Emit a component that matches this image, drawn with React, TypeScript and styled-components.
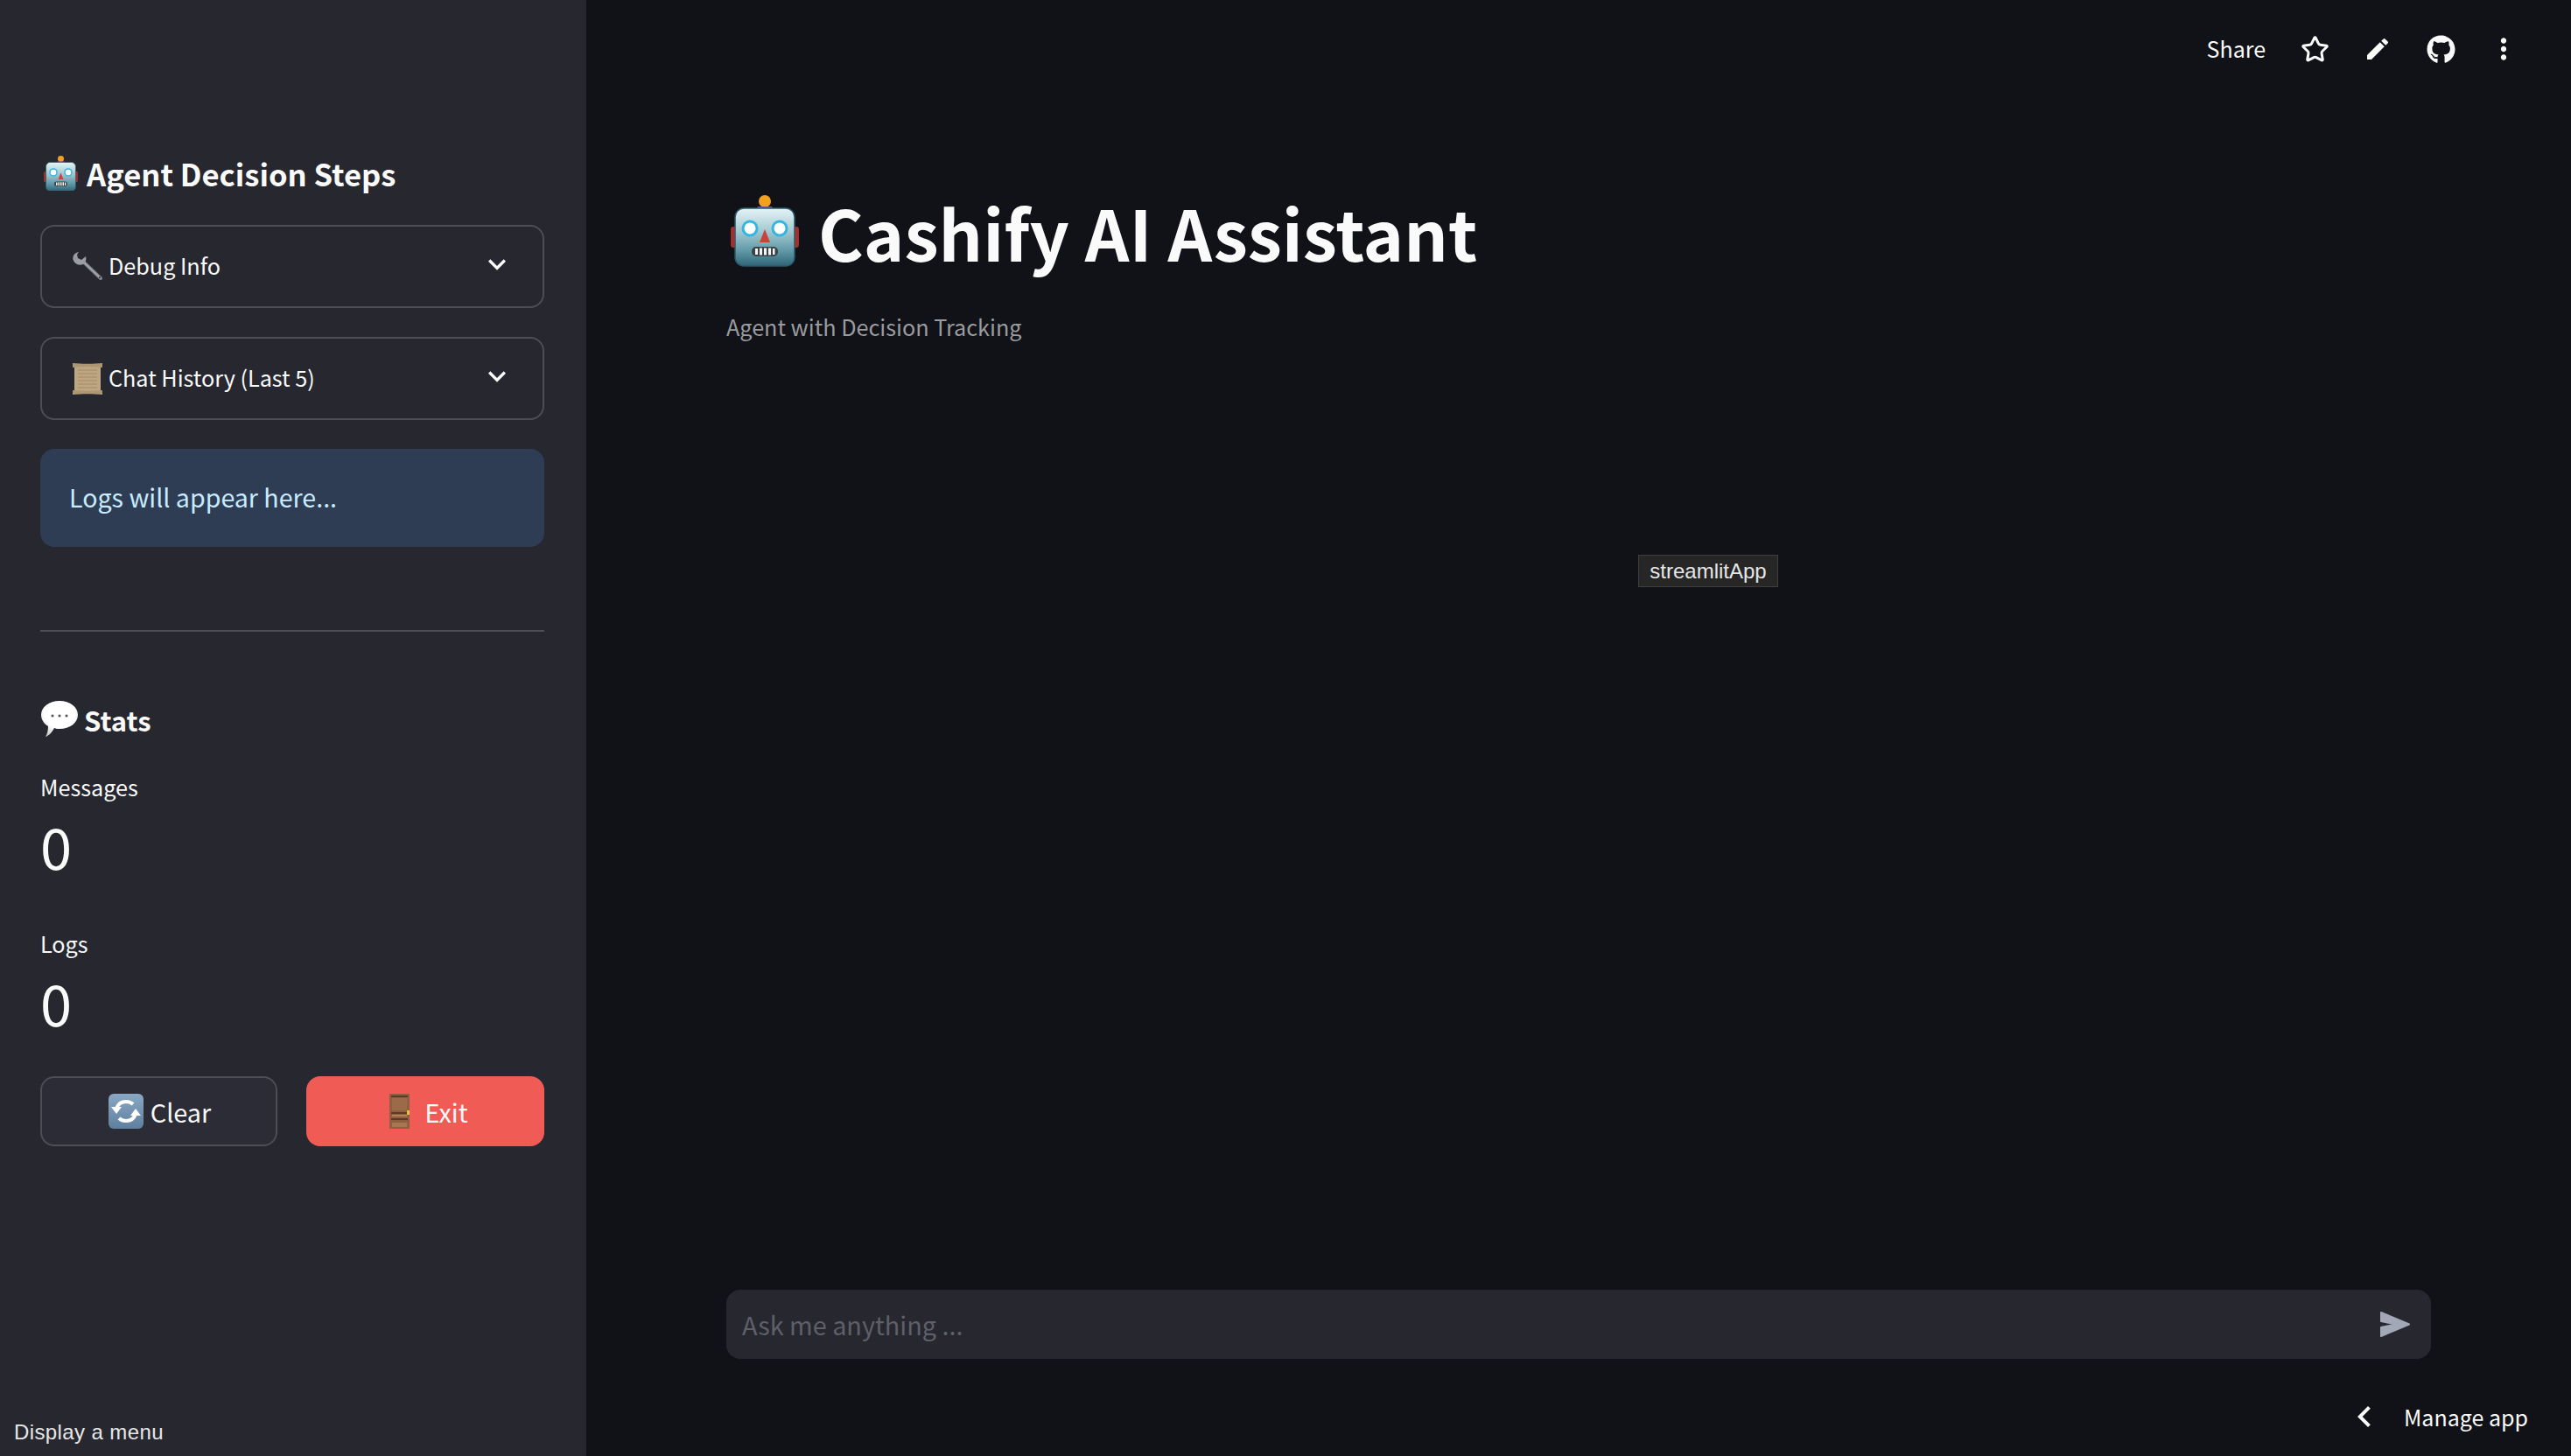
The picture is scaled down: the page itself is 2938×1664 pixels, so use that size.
import React from "react";
import styled, { createGlobalStyle } from "styled-components";
import { MdEdit, MdMoreVert, MdExpandMore, MdChevronLeft } from "react-icons/md";
import { FaGithub } from "react-icons/fa";
import { Star } from "lucide-react";

const Global = createGlobalStyle`
  html, body { margin: 0; padding: 0; background: #101217; }
  body { font-family: "Noto Sans CJK SC", "Noto Sans", sans-serif; color: #fafafa; overflow: hidden; }
  * { box-sizing: border-box; }
`;

const Page = styled.div`
  display: flex;
  width: 2938px;
  height: 1664px;
  position: relative;
  background: #101217;
`;

const Sidebar = styled.aside`
  width: 670px;
  height: 100%;
  flex: none;
  background: #27282f;
  padding: 170px 48px 0 46px;
  display: flex;
  flex-direction: column;
`;

const SideHeading = styled.h3<{ $small?: boolean }>`
  margin: ${p => (p.$small ? "75px 0 0" : "0")};
  height: ${p => (p.$small ? "50px" : "56px")};
  display: flex;
  align-items: center;
  gap: ${p => (p.$small ? "7px" : "10px")};
  padding-left: ${p => (p.$small ? "1px" : "4px")};
  font-size: ${p => (p.$small ? "31px" : "34.6px")};
  font-weight: 700;
  color: #fafafa;
`;

const Expander = styled.div<{ $first?: boolean }>`
  margin-top: ${p => (p.$first ? "31px" : "33px")};
  height: 95px;
  border: 2px solid #4c4d56;
  border-radius: 16px;
  padding: 0 32px 0 34px;
  display: flex;
  align-items: center;
  font-size: 25.2px;
  gap: 6px;
  color: #fafafa;
`;

const ExpanderLabel = styled.span`
  flex: 1;
  margin-top: -3px;
`;

const Chevron = styled(MdExpandMore)`
  font-size: 40px;
  margin-top: -6px;
  color: #fafafa;
`;

const InfoBox = styled.div`
  margin-top: 33px;
  height: 112px;
  border-radius: 16px;
  background: #2f3d54;
  color: #c7ebff;
  font-size: 28.6px;
  display: flex;
  align-items: center;
  padding: 0 0 3px 33px;
`;

const Divider = styled.hr`
  margin: 95px 0 0;
  border: 0;
  height: 2px;
  background: #4c4d56;
`;

const MetricLabel = styled.div<{ $first?: boolean }>`
  margin-top: ${p => (p.$first ? "32px" : "48px")};
  height: 40px;
  font-size: 25.2px;
  line-height: 40px;
  color: #fafafa;
`;

const MetricValue = styled.div`
  margin-top: 3px;
  height: 88px;
  font-size: 65px;
  line-height: 88px;
  font-weight: 400;
  color: #fafafa;
`;

const ButtonRow = styled.div`
  margin-top: 41px;
  display: grid;
  grid-template-columns: 271px 272px;
  gap: 33px;
`;

const ActionButton = styled.button<{ $danger?: boolean }>`
  height: 80px;
  border-radius: 16px;
  border: ${p => (p.$danger ? "0" : "2px solid #4c4d56")};
  background: ${p => (p.$danger ? "#f15b55" : "#2b2c36")};
  color: #fafafa;
  font-family: inherit;
  font-size: 28.8px;
  display: flex;
  align-items: center;
  justify-content: center;
  gap: ${p => (p.$danger ? "16px" : "8px")};
  padding: 0 0 0 ${p => (p.$danger ? "8px" : "2px")};
`;

const Main = styled.main`
  flex: 1;
  height: 100%;
  display: flex;
  flex-direction: column;
`;

const Toolbar = styled.header`
  height: 112px;
  flex: none;
  display: flex;
  align-items: center;
  justify-content: flex-end;
  padding-right: 41px;
`;

const ShareLabel = styled.span`
  font-size: 25px;
  margin: -3px 20px 0 0;
  color: #fafafa;
`;

const ToolIcon = styled.span`
  width: 72px;
  display: flex;
  justify-content: center;
  align-items: center;
  color: #fafafa;
`;

const Content = styled.section`
  flex: 1;
  padding: 0 0 0 160px;
`;

const Title = styled.h1`
  margin: 92px 0 0;
  height: 120px;
  display: flex;
  align-items: center;
  gap: 22px;
  padding-left: 5px;
  font-size: 79px;
  font-weight: 700;
  color: #fafafa;
`;

const Caption = styled.p`
  margin: 29px 0 0;
  height: 40px;
  line-height: 40px;
  font-size: 25.2px;
  color: #9a9b9e;
`;

const ChatBar = styled.div`
  flex: none;
  margin-left: 160px;
  width: 1948px;
  height: 79px;
  border-radius: 16px;
  background: #27282f;
  display: flex;
  align-items: center;
  justify-content: space-between;
  padding: 0 23px 0 18px;
`;

const Placeholder = styled.span`
  font-size: 28.8px;
  color: #5e5f68;
`;

const Footer = styled.footer`
  flex: none;
  height: 111px;
  display: flex;
  align-items: center;
  justify-content: flex-end;
  padding: 21px 49px 0 0;
`;

const ManageChevron = styled(MdChevronLeft)`
  font-size: 48px;
  margin-right: 21px;
  color: #fafafa;
`;

const ManageLabel = styled.span`
  font-size: 25px;
  color: #fafafa;
`;

const Tip = styled.div`
  position: absolute;
  font-family: "Liberation Sans", Arial, sans-serif;
  font-size: 24px;
  color: #e6e6e6;
  white-space: nowrap;
`;

const ElementTip = styled(Tip)`
  left: 1872px;
  top: 634px;
  width: 160px;
  height: 37px;
  line-height: 35px;
  text-align: center;
  background: #262626;
  border: 1px solid #3e3e3e;
`;

const MenuTip = styled(Tip)`
  left: 16px;
  top: 1623px;
  line-height: 28px;
  letter-spacing: 0.4px;
`;

const Emoji = styled.svg`
  flex: none;
  display: block;
`;

const Robot = ({ size, id }: { size: number; id: string }) => (
  <Emoji width={size} height={size * 1.05} viewBox="0 0 78 82">
    <defs>
      <linearGradient id={id} x1="0" y1="0" x2="0" y2="1">
        <stop offset="0" stopColor="#e6f4f6" />
        <stop offset="0.4" stopColor="#a3c9d1" />
        <stop offset="0.75" stopColor="#5f97a6" />
        <stop offset="1" stopColor="#2f6577" />
      </linearGradient>
    </defs>
    <rect x="0" y="36" width="10" height="24" rx="3" fill="#a5302b" />
    <rect x="68" y="36" width="10" height="24" rx="3" fill="#a5302b" />
    <ellipse cx="39" cy="7" rx="7" ry="7" fill="#f2a11e" />
    <path d="M31 13h16l3 6c-3 2-19 2-22 0z" fill="#6b5a9c" />
    <rect x="5" y="15" width="68" height="66" rx="10" fill={`url(#${id})`} stroke="#2e5b6b" strokeWidth="1.5" />
    <circle cx="22" cy="38" r="9.5" fill="#35b6e0" />
    <circle cx="56" cy="38" r="9.5" fill="#35b6e0" />
    <circle cx="22" cy="38" r="6.5" fill="#ffffff" />
    <circle cx="56" cy="38" r="6.5" fill="#ffffff" />
    <path d="M39 39l6 15H33z" fill="#c9433c" />
    <rect x="24" y="59" width="30" height="11" rx="5" fill="#3a4347" />
    <path d="M28 61h3v7h-3zM33 60.5h3v8h-3zM38 60.5h3v8h-3zM43 60.5h3v8h-3zM48 61h2.5v7H48z" fill="#f4f6f6" />
  </Emoji>
);

const Wrench = () => (
  <Emoji width="36" height="34" viewBox="0 0 36 34">
    <path d="M13 11L33 30" stroke="#7d8084" strokeWidth="4" strokeLinecap="round" />
    <path d="M13 11L33 30" stroke="#a9acaf" strokeWidth="1.5" strokeLinecap="round" />
    <path d="M8 0C3 1 0 5 2 10c2 4 7 6 11 4 3-2 4-6 3-9l-5 4-4-2-1-4z" fill="#9a9da1" />
    <circle cx="32" cy="29" r="1" fill="#2b2c36" />
  </Emoji>
);

const Scroll = () => (
  <Emoji width="36" height="36" viewBox="0 0 36 36">
    <rect x="3" y="2" width="30" height="32" fill="#bfa682" />
    <path d="M7 8h22M7 12h22M7 16h22M7 20h22M7 24h22M7 28h22" stroke="#a48a67" strokeWidth="1" />
    <path d="M1 0c10 1 24 1 34 0v5C25 4 11 4 1 5z" fill="#ad9673" />
    <path d="M1 31c10 1 24 1 34 0v5c-10-1-24-1-34 0z" fill="#ad9673" />
  </Emoji>
);

const Bubble = () => (
  <Emoji width="42" height="42" viewBox="0 0 42 42">
    <defs>
      <radialGradient id="bub" cx="0.5" cy="0.35" r="0.7">
        <stop offset="0.6" stopColor="#ffffff" />
        <stop offset="1" stopColor="#c4c4c4" />
      </radialGradient>
    </defs>
    <path d="M21 0c12 0 21 7 21 16S33 32 21 32c-2 0-4 0-6-1-2 4-6 9-10 10 2-3 3-8 3-12C3 26 0 21 0 16 0 7 9 0 21 0z" fill="url(#bub)" />
    <circle cx="13" cy="17" r="1.6" fill="#555" />
    <circle cx="21" cy="17" r="1.6" fill="#555" />
    <circle cx="29" cy="17" r="1.6" fill="#555" />
  </Emoji>
);

const Refresh = () => (
  <Emoji width="40" height="40" viewBox="0 0 40 40">
    <defs>
      <linearGradient id="refr" x1="0" y1="0" x2="0" y2="1">
        <stop offset="0" stopColor="#8aa8c4" />
        <stop offset="1" stopColor="#5f7f9e" />
      </linearGradient>
    </defs>
    <rect width="40" height="40" rx="6" fill="url(#refr)" />
    <path d="M9 17c2-6 6-8 11-8 3 0 6 1 8 3" fill="none" stroke="#fff" strokeWidth="4" />
    <path d="M31 23c-2 6-6 8-11 8-3 0-6-1-8-3" fill="none" stroke="#fff" strokeWidth="4" />
    <path d="M3 15h12l-6 8zM37 25H25l6-8z" fill="#fff" />
  </Emoji>
);

const Door = () => (
  <Emoji width="24" height="40" viewBox="0 0 24 40">
    <rect x="0" y="0" width="23" height="40" fill="#8f5f40" />
    <rect x="2" y="2" width="19" height="2" fill="#5b3a26" />
    <rect x="3" y="5" width="17" height="14" fill="#9b6a48" />
    <rect x="2" y="21" width="19" height="2" fill="#5b3a26" />
    <rect x="3" y="24" width="17" height="2" fill="#b08058" />
    <rect x="2" y="28" width="19" height="2" fill="#5b3a26" />
    <rect x="3" y="33" width="17" height="5" fill="#a87550" />
    <rect x="20" y="19" width="3" height="5" fill="#e6c23c" />
  </Emoji>
);

const Send = () => (
  <Emoji width="36" height="31" viewBox="0 0 36 31">
    <path d="M2 2L34 15.5 2 29l0-10 17-3.5L2 12z" fill="#a3a8b8" stroke="#a3a8b8" strokeWidth="2" strokeLinejoin="round" />
  </Emoji>
);

export default function App() {
  return (
    <Page>
      <Global />
      <Sidebar>
        <SideHeading>
          <Robot size={39} id="robotSmall" />
          Agent Decision Steps
        </SideHeading>
        <Expander $first>
          <Wrench />
          <ExpanderLabel>Debug Info</ExpanderLabel>
          <Chevron />
        </Expander>
        <Expander>
          <Scroll />
          <ExpanderLabel>Chat History (Last 5)</ExpanderLabel>
          <Chevron />
        </Expander>
        <InfoBox>Logs will appear here...</InfoBox>
        <Divider />
        <SideHeading $small>
          <Bubble />
          Stats
        </SideHeading>
        <MetricLabel $first>Messages</MetricLabel>
        <MetricValue>0</MetricValue>
        <MetricLabel>Logs</MetricLabel>
        <MetricValue>0</MetricValue>
        <ButtonRow>
          <ActionButton>
            <Refresh />
            Clear
          </ActionButton>
          <ActionButton $danger>
            <Door />
            Exit
          </ActionButton>
        </ButtonRow>
      </Sidebar>
      <Main>
        <Toolbar>
          <ShareLabel>Share</ShareLabel>
          <ToolIcon><Star size={33} strokeWidth={2.2} /></ToolIcon>
          <ToolIcon><MdEdit size={32} /></ToolIcon>
          <ToolIcon><FaGithub size={33} /></ToolIcon>
          <ToolIcon><MdMoreVert size={38} /></ToolIcon>
        </Toolbar>
        <Content>
          <Title>
            <Robot size={78} id="robotLarge" />
            Cashify AI Assistant
          </Title>
          <Caption>Agent with Decision Tracking</Caption>
        </Content>
        <ChatBar>
          <Placeholder>Ask me anything ...</Placeholder>
          <Send />
        </ChatBar>
        <Footer>
          <ManageChevron />
          <ManageLabel>Manage app</ManageLabel>
        </Footer>
      </Main>
      <ElementTip>streamlitApp</ElementTip>
      <MenuTip>Display a menu</MenuTip>
    </Page>
  );
}
